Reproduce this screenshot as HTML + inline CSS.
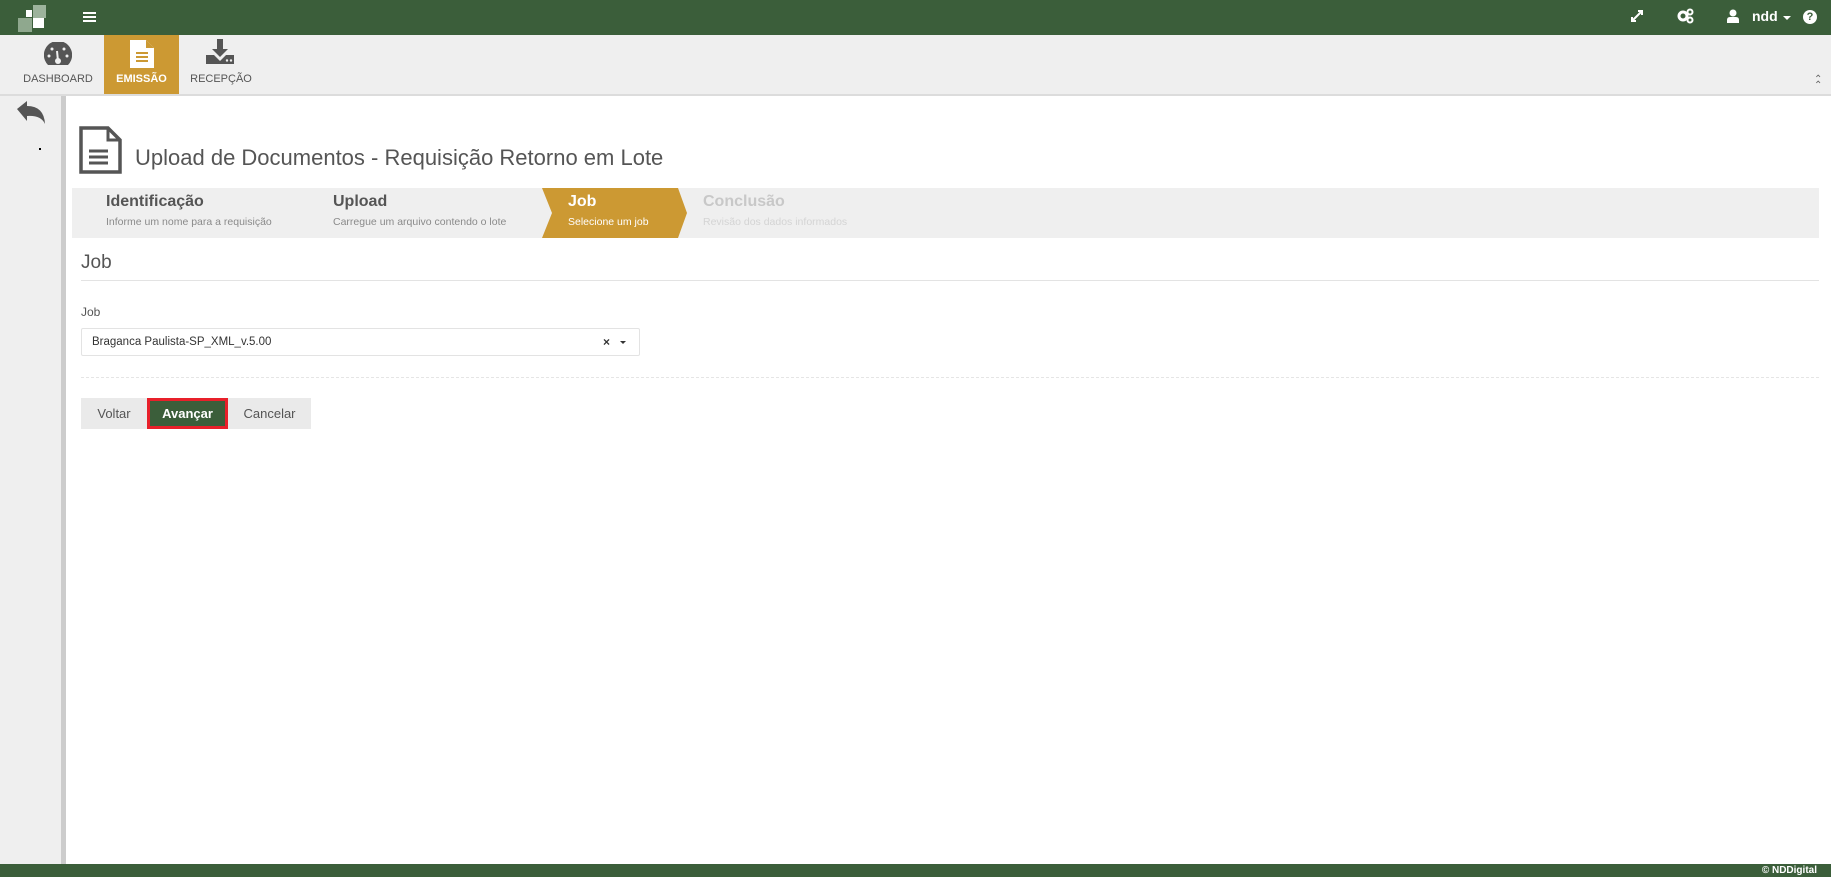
<!DOCTYPE html>
<html><head><meta charset="utf-8"><style>
*{margin:0;padding:0;box-sizing:border-box}
body{width:1831px;height:877px;overflow:hidden;background:#fff;font-family:"Liberation Sans",sans-serif;color:#555;position:relative}
.abs{position:absolute}
.top{left:0;top:0;width:1831px;height:35px;background:#3b5e3a}
.tb{left:0;top:35px;width:1831px;height:61px;background:#efefef;border-bottom:2px solid #dcdcdc}
.tab{position:absolute;top:0;height:59px;text-align:center;font-size:11px;color:#555}
.tab span{position:absolute;bottom:9px;left:0;right:0}
.side{left:0;top:96px;height:768px;background:#efefef;border-right:5px solid #ccc;width:66px}
.foot{left:0;top:864px;width:1831px;height:13px;background:#3b5e3a;color:#fff;font-size:10px;font-weight:bold;text-align:right;padding-right:14px;line-height:13px}
.wiz{left:72px;top:188px;width:1747px;height:50px;background:#efefef}
.st{position:absolute;top:5px}
.st b{display:block;font-size:16px;color:#555}
.st i{display:block;font-style:normal;font-size:10.5px;color:#8a8a8a;margin-top:5px}
.btn{position:absolute;top:398px;height:31px;font-size:13px;line-height:31px;text-align:center;background:#eaeaea;color:#555}
</style></head><body>
<div class="abs top">
 <div class="abs" style="left:33px;top:5px;width:13px;height:13px;background:#9db39c"></div>
 <div class="abs" style="left:26px;top:10px;width:6px;height:7px;background:#fff"></div>
 <div class="abs" style="left:18px;top:18px;width:14px;height:14px;background:#8fa88e"></div>
 <div class="abs" style="left:33px;top:18px;width:11px;height:10px;background:#fff"></div>
 <div class="abs" style="left:83px;top:12px;width:13px;height:2px;background:#fff;box-shadow:0 4px 0 #fff,0 8px 0 #fff"></div>
 <svg class="abs" style="left:1630px;top:9px" width="14" height="14" viewBox="0 0 14 14"><path d="M2 12L12 2M8 2h4v4M2 8v4h4" stroke="#fff" stroke-width="2" fill="none"/></svg>
 <svg class="abs" style="left:1677px;top:8px" width="18" height="16" viewBox="0 0 18 16"><circle cx="6" cy="8" r="4" fill="none" stroke="#fff" stroke-width="3"/><circle cx="13" cy="4" r="2.5" fill="none" stroke="#fff" stroke-width="2"/><circle cx="13" cy="12" r="2.5" fill="none" stroke="#fff" stroke-width="2"/></svg>
 <svg class="abs" style="left:1727px;top:9px" width="12" height="14" viewBox="0 0 12 14"><circle cx="6" cy="4" r="3.5" fill="#fff"/><path d="M0 14v-3q0-3 3-3h6q3 0 3 3v3z" fill="#fff"/></svg>
 <div class="abs" style="left:1752px;top:8px;color:#fff;font-size:14px;font-weight:bold">ndd</div>
 <div class="abs" style="left:1783px;top:16px;border:4px solid transparent;border-top-color:#fff"></div>
 <div class="abs" style="left:1803px;top:10px;width:14px;height:14px;border-radius:50%;background:#fff;color:#3b5e3a;font-size:11px;font-weight:bold;text-align:center;line-height:14px">?</div>
</div>
<div class="abs tb">
 <div class="tab" style="left:14px;width:88px">
  <svg class="abs" style="left:30px;top:7px" width="28" height="24" viewBox="0 0 28 24"><path d="M4 23A14.14 14.14 0 1 1 24 23z" fill="#555"/><path d="M14 19l-1-10" stroke="#efefef" stroke-width="2"/><circle cx="14" cy="19" r="3" fill="#efefef"/><circle cx="5" cy="14" r="1.5" fill="#efefef"/><circle cx="8" cy="7" r="1.5" fill="#efefef"/><circle cx="20" cy="7" r="1.5" fill="#efefef"/><circle cx="23" cy="14" r="1.5" fill="#efefef"/></svg>
  <span>DASHBOARD</span></div>
 <div class="tab" style="left:104px;width:75px;background:#cc9933;color:#fff;font-weight:bold">
  <svg class="abs" style="left:25px;top:5px" width="26" height="28" viewBox="0 0 26 28"><path d="M1 0h16l8 8v20H1z" fill="#fff"/><path d="M17 0v8h8" fill="#cc9933"/><path d="M7 13h12M7 17h12M7 21h12" stroke="#cc9933" stroke-width="2"/></svg>
  <span>EMISSÃO</span></div>
 <div class="tab" style="left:181px;width:80px">
  <svg class="abs" style="left:25px;top:4px" width="28" height="26" viewBox="0 0 28 26"><path d="M11 0h6v10h5l-8 8-8-8h5z" fill="#555"/><path d="M0 16h8l6 6 6-6h8v9H0z" fill="#555"/><circle cx="21" cy="21.5" r="1.2" fill="#efefef"/><circle cx="25" cy="21.5" r="1.2" fill="#efefef"/></svg>
  <span>RECEPÇÃO</span></div>
 <div class="abs" style="left:1814px;top:42px;font-size:10px;color:#666;line-height:6px">&#8963;<br>&#8963;</div>
</div>
<div class="abs side">
 <svg class="abs" style="left:17px;top:5px" width="29" height="23" viewBox="0 0 29 23"><path d="M0 8L10 0v5q17 0 18 18q-4-9-18-8v5z" fill="#555"/></svg>
 <div class="abs" style="left:39px;top:52px;width:2px;height:2px;background:#000"></div>
</div>
<svg class="abs" style="left:79px;top:126px" width="43" height="48" viewBox="0 0 43 48"><path d="M2 2h27l12 12v32H2z" fill="none" stroke="#555" stroke-width="3.5"/><path d="M29 2v12h12" fill="none" stroke="#555" stroke-width="3"/><path d="M10 25h19M10 31h19M10 37h19" stroke="#555" stroke-width="3"/></svg>
<div class="abs" style="left:135px;top:145px;font-size:22px;color:#555">Upload de Documentos - Requisição Retorno em Lote</div>
<div class="abs wiz">
 <div class="st" style="left:34px"><b>Identificação</b><i>Informe um nome para a requisição</i></div>
 <div class="st" style="left:261px"><b>Upload</b><i>Carregue um arquivo contendo o lote</i></div>
 <svg class="abs" style="left:470px;top:0" width="146" height="50" viewBox="0 0 146 50"><path d="M0 0h136l9 25-9 25H0l10-25z" fill="#cc9933"/></svg>
 <div class="st" style="left:496px"><b style="color:#fff">Job</b><i style="color:#fff">Selecione um job</i></div>
 <div class="st" style="left:631px"><b style="color:#c8c8c8">Conclusão</b><i style="color:#d4d4d4">Revisão dos dados informados</i></div>
</div>
<div class="abs" style="left:81px;top:252px;font-size:19px;color:#555">Job</div>
<div class="abs" style="left:81px;top:280px;width:1738px;height:1px;background:#e3e3e3"></div>
<div class="abs" style="left:81px;top:305px;font-size:12px;color:#555">Job</div>
<div class="abs" style="left:81px;top:328px;width:559px;height:28px;border:1px solid #e3e3e3;border-radius:2px;font-size:11.5px;color:#333;padding:7px 10px">Braganca Paulista-SP_XML_v.5.00</div>
<div class="abs" style="left:603px;top:335px;font-size:12px;font-weight:bold;color:#333">×</div>
<div class="abs" style="left:620px;top:341px;border:3.5px solid transparent;border-top-color:#333"></div>
<div class="abs" style="left:81px;top:377px;width:1738px;border-top:1px dashed #e5e5e5"></div>
<div class="btn" style="left:81px;width:66px">Voltar</div>
<div class="btn" style="left:147px;width:81px;background:#3b5e3a;color:#fff;font-weight:bold;border:3px solid #e8202a;line-height:25px">Avançar</div>
<div class="btn" style="left:228px;width:83px">Cancelar</div>
<div class="abs foot">© NDDigital</div>
</body></html>
